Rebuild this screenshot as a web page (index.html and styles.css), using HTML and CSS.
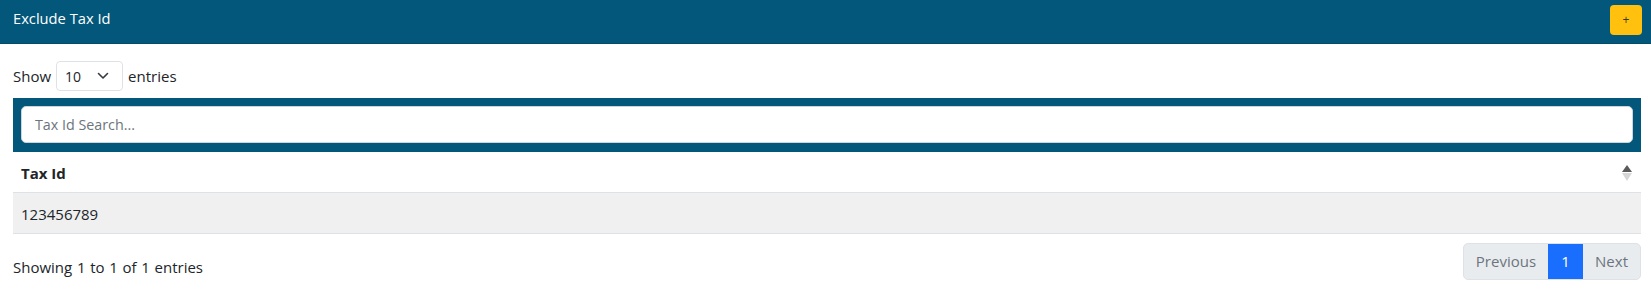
FILE: index.html
```html
<!DOCTYPE html>
<html>
<head>
<meta charset="utf-8">
<link rel="stylesheet" href="styles.css">
</head>
<body>
<header class="topbar">
  <span class="title">Exclude Tax Id</span>
  <button class="add-btn">+</button>
</header>
<main class="content">
  <div class="length">
    <span>Show</span>
    <div class="select"><span>10</span>
      <svg class="chev" width="12" height="8" viewBox="0 0 12 8"><path d="M1.5 1.5 L6 6 L10.5 1.5" fill="none" stroke="#343a40" stroke-width="1.6" stroke-linecap="round" stroke-linejoin="round"/></svg>
    </div>
    <span>entries</span>
  </div>
  <div class="search-band">
    <div class="search-input">Tax Id Search...</div>
  </div>
  <div class="table">
    <div class="thead">
      <span class="th">Tax Id</span>
      <span class="sort"><span class="up"></span><span class="down"></span></span>
    </div>
    <div class="row">123456789</div>
  </div>
  <div class="footer">
    <span class="info">Showing 1 to 1 of 1 entries</span>
    <div class="pager">
      <span class="pg">Previous</span>
      <span class="pg active">1</span>
      <span class="pg">Next</span>
    </div>
  </div>
</main>
</body>
</html>
```
FILE: styles.css
```css
body {
  margin: 0;
  font-family: "Open Sans", "Noto Sans", sans-serif;
  font-size: 15px;
  color: #212529;
  background: #fff;
}
.topbar {
  height: 43px;
  background: #02577a;
  border-bottom: 1px solid #024a68;
  display: flex;
  justify-content: space-between;
  align-items: flex-start;
  padding: 0 9px 0 13px;
}
.title {
  color: #fff;
  font-size: 14.7px;
  line-height: 20px;
  margin-top: 8px;
}
.add-btn {
  margin-top: 5px;
  width: 32px;
  height: 30px;
  border: 0;
  border-radius: 4px;
  background: #ffc10e;
  color: #3a3a10;
  font-size: 12px;
  line-height: 30px;
  padding: 0;
  font-family: "Open Sans", sans-serif;
}
.content {
  padding: 0 10px 0 13px;
}
.length {
  display: flex;
  align-items: center;
  height: 30px;
  margin-top: 17px;
  font-size: 15px;
}
.select {
  width: 67px;
  height: 30px;
  box-sizing: border-box;
  border: 1px solid #dee2e6;
  border-radius: 4px;
  margin: 0 5px 0 5px;
  display: flex;
  align-items: center;
  justify-content: space-between;
  padding: 0 13px 0 8px;
  font-size: 14px;
}
.search-band {
  margin-top: 7px;
  background: #02577a;
  padding: 8px;
  height: 54px;
  box-sizing: border-box;
}
.search-input {
  height: 37px;
  box-sizing: border-box;
  background: #fff;
  border: 1px solid #ced4da;
  border-radius: 5px;
  padding: 0 13px;
  line-height: 35px;
  color: #6c757d;
  font-size: 14.3px;
}
.thead {
  height: 41px;
  box-sizing: border-box;
  border-bottom: 1px solid #dee2e6;
  display: flex;
  align-items: center;
  justify-content: space-between;
  padding: 2px 9px 0 8px;
}
.th {
  font-weight: bold;
  font-size: 15px;
}
.sort {
  display: flex;
  flex-direction: column;
  gap: 1px;
}
.up, .down {
  width: 0;
  height: 0;
  border-left: 5px solid transparent;
  border-right: 5px solid transparent;
}
.up { border-bottom: 7px solid #5a5a5a; }
.down { border-top: 8px solid #d6d6d6; }
.row {
  height: 41px;
  box-sizing: border-box;
  background: #f0f0f0;
  border-bottom: 1px solid #dee2e6;
  padding: 2px 8px 0;
  line-height: 38px;
  font-size: 15px;
}
.footer {
  display: flex;
  justify-content: space-between;
  align-items: center;
  margin-top: 9px;
}
.info {
  margin-top: 10px;
  font-size: 15px;
  word-spacing: 0.8px;
}
.pager {
  display: flex;
  height: 37px;
  border: 1px solid #dee2e6;
  border-radius: 5px;
  overflow: hidden;
  background: #e9ecef;
  box-sizing: border-box;
  font-size: 15px;
}
.pg {
  line-height: 35px;
  padding: 0 12px;
  color: #6c757d;
}
.pg.active {
  background: #1a6efd;
  color: #fff;
  width: 35px;
  padding: 0;
  text-align: center;
}
```
